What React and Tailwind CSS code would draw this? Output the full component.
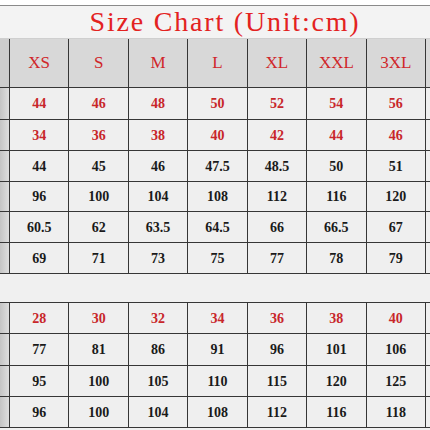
const sizes = ['XS', 'S', 'M', 'L', 'XL', 'XXL', '3XL'];

const topRows = [
  { red: true, h: 'h-[31px]', vals: ['44', '46', '48', '50', '52', '54', '56'] },
  { red: true, h: 'h-[30px]', vals: ['34', '36', '38', '40', '42', '44', '46'] },
  { h: 'h-[30px]', vals: ['44', '45', '46', '47.5', '48.5', '50', '51'] },
  { h: 'h-[29px]', vals: ['96', '100', '104', '108', '112', '116', '120'] },
  { h: 'h-[30px]', vals: ['60.5', '62', '63.5', '64.5', '66', '66.5', '67'] },
  { h: 'h-[30px]', vals: ['69', '71', '73', '75', '77', '78', '79'] },
];

const bottomRows = [
  { red: true, h: 'h-[30px]', vals: ['28', '30', '32', '34', '36', '38', '40'] },
  { h: 'h-[31px]', vals: ['77', '81', '86', '91', '96', '101', '106'] },
  { h: 'h-[30px]', vals: ['95', '100', '105', '110', '115', '120', '125'] },
  { h: 'h-[30px]', vals: ['96', '100', '104', '108', '112', '116', '118'] },
];

function Row({ row }) {
  return (
    <div className={`grid grid-cols-[9px_repeat(7,minmax(0,1fr))_4px] gap-x-px ${row.h}`}>
      <div className="bg-gradient-to-r from-[#c4c4c4] to-[#dedede]" />
      {row.vals.map((v, i) => (
        <div
          key={i}
          className={`flex items-center justify-center bg-[#efefef] text-[14px] font-bold ${row.red ? 'text-[#c8262a]' : 'text-[#1a1a1a]'}`}
        >
          {v}
        </div>
      ))}
      <div className="bg-[#efefef]" />
    </div>
  );
}

export default function App() {
  return (
    <div className="w-[430px] h-[430px] overflow-hidden bg-white font-['Liberation_Serif',serif]">
      <div className="h-[5px] bg-white" />
      <div className="h-px bg-[#8a8a8a]" />
      <div className="h-[32px] bg-[#f3f3f3] flex items-center justify-center pl-[20px]">
        <span className="text-[28px] tracking-[1.8px] text-[#e3221f] leading-none">
          Size Chart (Unit:cm)
        </span>
      </div>
      <div className="h-px bg-[#cfcfcf]" />

      <div className="flex flex-col gap-y-px bg-[#363636]">
        <div className="grid grid-cols-[9px_repeat(7,minmax(0,1fr))_4px] gap-x-px h-[48px]">
          <div className="bg-[#cdcdcd]" />
          {sizes.map((s) => (
            <div key={s} className="flex items-center justify-center bg-[#d8d8d8] text-[17px] text-[#d0262a]">
              {s}
            </div>
          ))}
          <div className="bg-[#d8d8d8]" />
        </div>
        {topRows.map((r, i) => (
          <Row key={i} row={r} />
        ))}
        <div className="h-0" />
      </div>

      <div className="h-[28px] bg-[#f0f0f0]" />

      <div className="flex flex-col gap-y-px bg-[#363636] pt-px">
        {bottomRows.map((r, i) => (
          <Row key={i} row={r} />
        ))}
        <div className="h-[2px] bg-[#f0f0f0]" />
      </div>
    </div>
  );
}
